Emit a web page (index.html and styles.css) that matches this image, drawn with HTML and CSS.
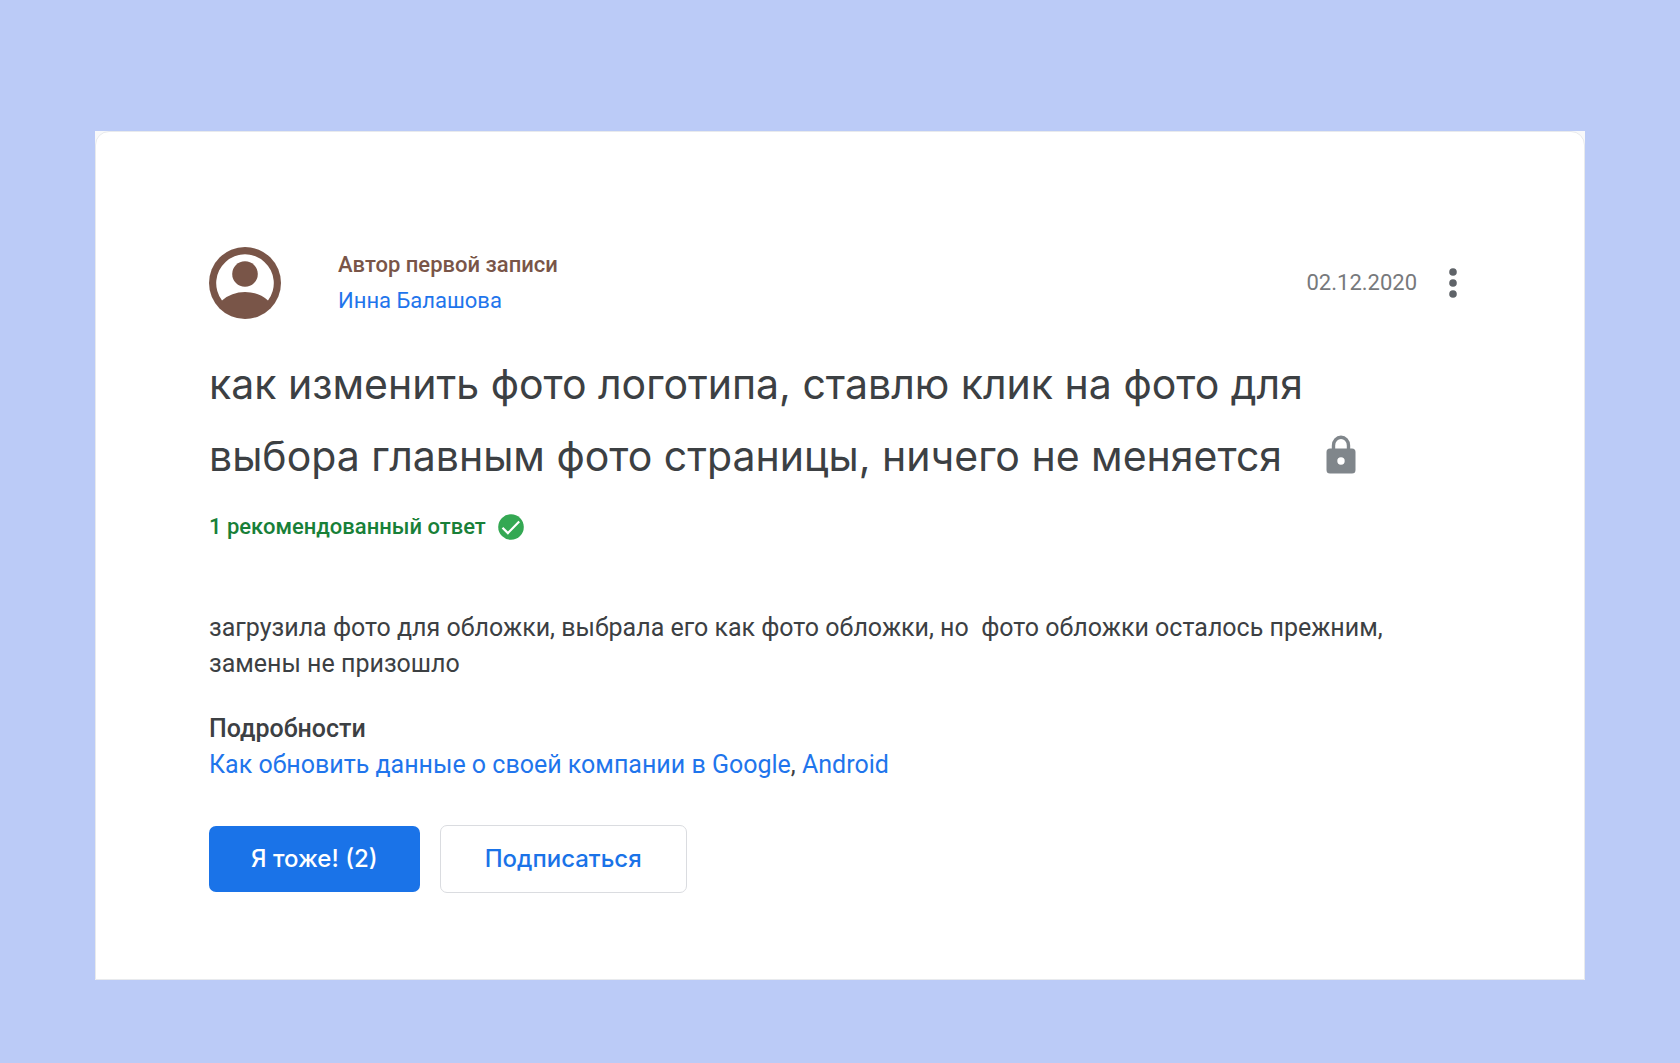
FILE: index.html
```html
<!DOCTYPE html>
<html lang="ru">
<head>
<meta charset="utf-8">
<meta name="viewport" content="width=device-width, initial-scale=1">
<title>как изменить фото логотипа</title>
<link rel="stylesheet" href="styles.css">
</head>
<body>
<main class="page">
  <article class="card">
    <div class="thread">
      <header class="author">
        <svg class="avatar" viewBox="0 0 72 72" aria-hidden="true">
          <circle cx="36" cy="36" r="36" fill="#795548"/>
          <path d="M13 53.500A28.800 28.800 0 1 1 59 53.500Q49.500 45 36 45T13 53.500Z" fill="#fff"/>
          <circle cx="36" cy="27" r="12.800" fill="#795548"/>
        </svg>
        <div class="author-text">
          <span class="author-role">Автор первой записи</span>
          <a class="link" href="#author">Инна Балашова</a>
        </div>
        <time class="date" datetime="2020-12-02">02.12.2020</time>
        <button class="menu" type="button" aria-label="Ещё">
          <svg class="menu-icon" viewBox="0 0 8 30" aria-hidden="true">
            <g fill="#5f6368"><circle cx="4" cy="4" r="3.800"/><circle cx="4" cy="15" r="3.800"/><circle cx="4" cy="26" r="3.800"/></g>
          </svg>
        </button>
      </header>
      <h1 class="title">как изменить фото логотипа, ставлю клик на фото для выбора главным фото страницы, ничего не меняется<svg class="lock" viewBox="0 0 30 40" aria-hidden="true">
          <path d="M7.500 16V10.500a7.500 8.300 0 0 1 15 0V16" fill="none" stroke="#80868b" stroke-width="3.400"/>
          <path fill="#80868b" fill-rule="evenodd" d="M4 13.500H26a3.500 3.500 0 0 1 3.500 3.500V35a3.500 3.500 0 0 1-3.500 3.500H4A3.500 3.500 0 0 1 .5 35V17A3.500 3.500 0 0 1 4 13.500ZM15 22.300a3.700 3.700 0 1 0 0 7.400a3.700 3.700 0 1 0 0-7.400Z"/>
        </svg></h1>
      <p class="answers">1 рекомендованный ответ
        <svg class="check" viewBox="0 0 26 26" aria-hidden="true">
          <circle cx="13" cy="13" r="12.800" fill="#34a853"/>
          <path d="M4.500 13.700l5.400 5.400L21.200 7.600" fill="none" stroke="#fff" stroke-width="2.200"/>
        </svg>
      </p>
      <p class="message">загрузила фото для обложки, выбрала его как фото обложки, но&nbsp; фото обложки осталось прежним, замены не призошло</p>
      <section class="details">
        <h2 class="details-title">Подробности</h2>
        <p class="details-links"><a class="link" href="#company">Как обновить данные о своей компании в Google</a>, <a class="link" href="#android">Android</a></p>
      </section>
      <div class="actions">
        <button class="button button-primary" type="button">Я тоже! (2)</button>
        <button class="button button-outline" type="button">Подписаться</button>
      </div>
    </div>
  </article>
</main>
</body>
</html>
```
FILE: styles.css
```css
* {
  box-sizing: border-box;
}

body {
  margin: 0;
  background: #bbcbf7;
  color: #3c4043;
  font: 25px/36px Roboto, "Noto Sans", sans-serif;
}

h1,
h2,
p {
  margin: 0;
}

button {
  font: inherit;
  cursor: pointer;
}

.page {
  padding: 131px 95px 83px;
}

.card {
  background: #f8f9fa;
}

.thread {
  padding: 115px 113px 86px;
  border: 1px solid #e8eaed;
  border-radius: 14px 14px 0 0;
  background: #fff;
}

.link {
  color: #1f75ec;
  text-decoration: none;
}

.author {
  display: flex;
  align-items: center;
  font-size: 22px;
}

.avatar {
  width: 72px;
  height: 72px;
  margin-right: 57px;
}

.author-text {
  display: flex;
  flex-direction: column;
  flex: 1;
}

.author-role {
  color: #795548;
  font-weight: 500;
}

.date {
  color: #77797c;
}

.menu {
  display: flex;
  justify-content: center;
  width: 36px;
  margin-left: 18px;
  padding: 21px 0;
  border: 0;
  background: none;
}

.menu-icon {
  width: 8px;
  height: 30px;
}

.title {
  margin-top: 29px;
  padding-right: 54px;
  font: 400 41px/72px Inter, "Noto Sans", sans-serif;
}

.lock {
  width: 30px;
  height: 40px;
  margin-left: 44px;
  vertical-align: -4px;
}

.answers {
  display: flex;
  align-items: center;
  gap: 12px;
  margin-top: 17px;
  color: #188038;
  font-size: 22px;
  font-weight: 500;
}

.check {
  width: 26px;
  height: 26px;
}

.message {
  margin-top: 65px;
  padding-right: 54px;
}

.details {
  margin-top: 29px;
}

.details-title {
  font-size: 25px;
  font-weight: 500;
}

.actions {
  display: flex;
  align-items: center;
  gap: 20px;
  margin-top: 42px;
}

.button {
  padding: 15px 42px;
  border: 0;
  border-radius: 7px;
  font-family: Inter, "Noto Sans", sans-serif;
  font-size: 24px;
  font-weight: 500;
}

.button-primary {
  background: #1a73e8;
  color: #fff;
}

.button-outline {
  padding: 15px 44px;
  border: 1px solid #dadce0;
  background: #fff;
  color: #1a73e8;
}
```
